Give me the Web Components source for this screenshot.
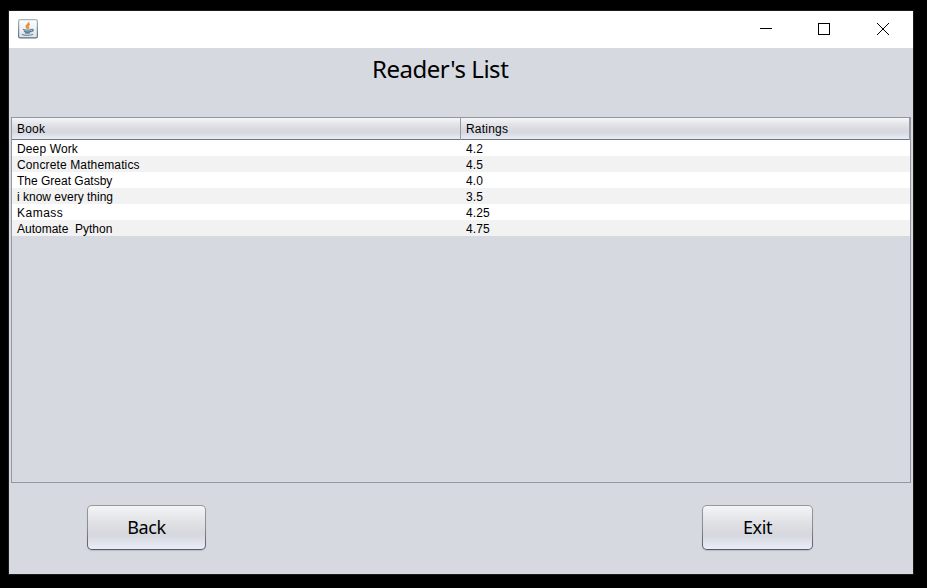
<!DOCTYPE html>
<html lang="en">
<head>
<meta charset="utf-8">
<title>Reader's List</title>
<style>
html{background:#000}
body{margin:0;width:927px;height:588px;overflow:hidden;background:#000;padding:10px 13px 13px 8px;box-sizing:border-box}
</style>
</head>
<body>
<app-window>
  <title-bar slot="bar"></title-bar>
  <page-title style="--ls:-0.47px">Reader's List</page-title>
  <book-table></book-table>
  <button-row>
    <push-button style="--w:119px">Back</push-button>
    <push-button style="--w:111px">Exit</push-button>
  </button-row>
</app-window>
<script>
const define = (name, html) => customElements.define(name, class extends HTMLElement {
  constructor() { super(); this.attachShadow({mode: 'open'}).innerHTML = html; }
});

define('app-window', `<style>
:host{display:flex;flex-direction:column;box-sizing:border-box;width:906px;height:565px;border:1px solid #1b1b1d;background:#d6d9e0}
main{flex:1;display:flex;flex-direction:column;padding:0 2px}
</style><slot name="bar"></slot><main><slot></slot></main>`);

define('title-bar', `<style>
:host{display:flex;height:37px;background:#fff;justify-content:space-between;box-sizing:border-box;padding-left:9px}
.i{margin-top:8px;display:block}
.c{display:block}
</style>
<svg class="i" width="20" height="20" viewBox="0 0 20 20">
<defs><linearGradient id="g" x2="0" y2="1"><stop stop-color="#fdfdfd"/><stop offset="1" stop-color="#dfe3e7"/></linearGradient>
<linearGradient id="b" x2="0" y2="1"><stop stop-color="#a9b5bf"/><stop offset="1" stop-color="#557083"/></linearGradient></defs>
<rect x=".6" y=".6" width="18.8" height="18.300" rx="1.600" fill="url(#g)" stroke="url(#b)" stroke-width="1.200"/>
<path d="M10.600 3.200c1 1.900-2.700 2.700-2.300 4.500.2.800.9 1.300 1.300 2M11.800 5.400c-1.800.900-2.300 1.800-1.400 2.800.6.600.1 1.100-.3 1.600" fill="none" stroke="#e98f45" stroke-width="1.600"/>
<path d="M5 10.300c2 .9 6.500.9 8.800 0M6 12.200c1.800.8 5 .8 7 0M6.800 13.600c1.700.6 4 .6 5.400 0M13.500 10.500c2.400-.4 2.400 1.600-.5 2.300" fill="none" stroke="#5f829c" stroke-width="1.400"/>
<path d="M3.800 15.300c2.500 1.500 9 1.400 11.400 0" fill="none" stroke="#7390a6" stroke-width="1.300"/>
</svg>
<svg class="c" width="160" height="37" viewBox="0 0 160 37" fill="none" stroke="#000">
<path d="M7 17.500h12" shape-rendering="crispEdges"/>
<rect x="65.500" y="12.500" width="11" height="11" shape-rendering="crispEdges"/>
<path d="M124 12l12 12M136 12l-12 12" stroke-width="1"/>
</svg>`);

define('page-title', `<style>
:host{display:block;height:69px;box-sizing:border-box;padding-top:5px;padding-left:361px;font:24px/32px "Noto Sans","DejaVu Sans",sans-serif;color:#000;letter-spacing:var(--ls)}
</style><slot></slot>`);

define('push-button', `<style>
:host{display:block;width:var(--w)}
button{display:block;width:100%;height:45px;padding:0 0 1px;border:1px solid transparent;border-radius:5px;
background:linear-gradient(#f4f5f6,#e4e5e8 30%,#d7d9de 60%,#d6d9e0 70%,#e9edf8) padding-box,linear-gradient(#96999e,#8a8d92 50%,#55585d) border-box;
box-shadow:0 1px 1px #b9bdc6;font:18px/40px "Noto Sans","DejaVu Sans",sans-serif;color:#000;letter-spacing:-.4px}
</style><button><slot></slot></button>`);

define('button-row', `<style>
:host{display:flex;justify-content:space-between;padding:22px 98px 0 76px}
</style><slot></slot>`);

const rows = [['Deep Work','4.2',.13],['Concrete Mathematics','4.5',.13],['The Great Gatsby','4.0',0],['i know every thing','3.5',0],['Kamass','4.25',.5],['Automate  Python','4.75',0]];
define('book-table', `<style>
:host{display:block;box-sizing:border-box;width:900px;height:366px;border:1px solid #9297a1;font:12px/16px "Liberation Sans",Arial,sans-serif;color:#000}
.h,.r{display:grid;grid-template-columns:449px 449px;white-space:pre}
.h{height:22px;box-sizing:border-box;border-bottom:1px solid #6f747d;line-height:22px;letter-spacing:.2px;background:linear-gradient(#f5f6f8,#e3e4e8 30%,#d8dae0 55%,#d6d9e0 70%,#e9edf6)}
.h span{border-right:1px solid #969aa3;box-sizing:border-box}
.r{height:16px;background:#fff;line-height:18px}
.alt{background:#f2f2f2}
span{padding-left:5px}
</style><div class="h"><span>Book</span><span>Ratings</span></div>${rows.map((r, i) => `<div class="r${i % 2 ? ' alt' : ''}"><span style="letter-spacing:${r[2]}px">${r[0]}</span><span style="letter-spacing:.1px">${r[1]}</span></div>`).join('')}`);
</script>
</body>
</html>
